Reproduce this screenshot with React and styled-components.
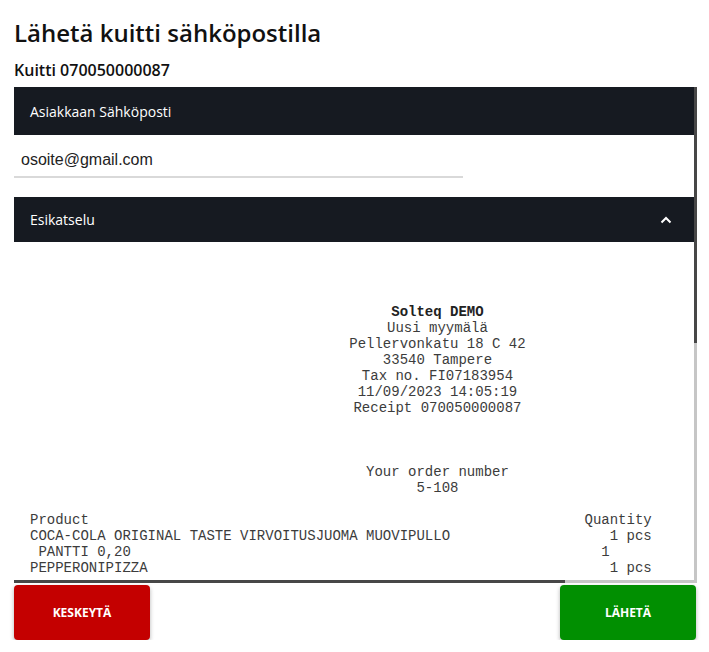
import React from 'react';
import styled, { createGlobalStyle } from 'styled-components';

const GlobalStyle = createGlobalStyle`
   html, body {
      margin: 0;
      padding: 0;
      background: #fff;
   }

   body {
      font-family: 'Open Sans', 'Liberation Sans', sans-serif;
      color: #111;
   }

   * {
      box-sizing: border-box;
   }
`;

const headerLines = [
   { text: 'Solteq DEMO', bold: true },
   { text: 'Uusi myymälä' },
   { text: 'Pellervonkatu 18 C 42' },
   { text: '33540 Tampere' },
   { text: 'Tax no. FI07183954' },
   { text: '11/09/2023 14:05:19' },
   { text: 'Receipt 070050000087' },
   { text: '' },
   { text: '' },
   { text: '' },
   { text: 'Your order number' },
   { text: '5-108' },
   { text: '' },
];

const pad = (left, right, width = 74) =>
   left + ' '.repeat(Math.max(1, width - left.length - right.length)) + right;

const rows = [
   pad('Product', 'Quantity'),
   pad('COCA-COLA ORIGINAL TASTE VIRVOITUSJUOMA MUOVIPULLO', '1 pcs'),
   pad(' PANTTI 0,20', '1     '),
   pad('PEPPERONIPIZZA', '1 pcs'),
   '',
   pad('Product', 'Price'),
   pad('COCA-COLA ORIGINAL TASTE VIRVOITUSJUOMA MUOVIPULLO', '3,20'),
   pad(' PANTTI 0,20', '0,20'),
   pad('PEPPERONIPIZZA', '11,90'),
   '',
   pad('Total', '15,30 EUR'),
];

// scroll geometry of the preview pane (content is larger than the pane)
const VIEW_W = 680;
const VIEW_H = 493;
const CONTENT_W = 843;
const CONTENT_H = 954;

const App = () => {
   const thumbH = Math.round((VIEW_H + 3) * (VIEW_H / CONTENT_H));
   const thumbW = Math.round((VIEW_W + 3) * (VIEW_W / CONTENT_W));

   return (
      <Page>
         <GlobalStyle />
         <Title>Lähetä kuitti sähköpostilla</Title>
         <Subtitle>Kuitti 070050000087</Subtitle>

         <ScrollFrame>
            <Viewport>
               <SectionBar $height={48}>Asiakkaan Sähköposti</SectionBar>
               <InputRow>
                  <EmailInput defaultValue="osoite@gmail.com" />
               </InputRow>

               <SectionBar $height={45}>
                  Esikatselu
                  <svg width="12" height="8" viewBox="0 0 12 8">
                     <polyline
                        points="1.5,6.5 6,2 10.5,6.5"
                        fill="none"
                        stroke="#fff"
                        strokeWidth="2"
                     />
                  </svg>
               </SectionBar>

               <Receipt>
                  {headerLines.map((line, i) => (
                     <Centered key={i} $bold={line.bold}>
                        {line.text || ' '}
                     </Centered>
                  ))}
                  {rows.map((row, i) => (
                     <Line key={`r${i}`}>{row || ' '}</Line>
                  ))}
               </Receipt>
            </Viewport>

            <VTrack>
               <VThumb style={{ height: thumbH }} />
            </VTrack>
            <HTrack>
               <HThumb style={{ width: thumbW }} />
            </HTrack>
         </ScrollFrame>

         <Actions>
            <ActionButton $color="#c40000">Keskeytä</ActionButton>
            <ActionButton $color="#018f01">Lähetä</ActionButton>
         </Actions>
      </Page>
   );
};

export default App;

const Page = styled.div`
   padding: 14px 12px 0 14px;
   width: 709px;
`;

const Title = styled.h1`
   margin: 0;
   font-size: 24px;
   font-weight: 600;
   line-height: 38px;
   color: #111;
`;

const Subtitle = styled.div`
   font-size: 16px;
   font-weight: 600;
   line-height: 22px;
   margin-top: 7px;
   margin-bottom: 6px;
   color: #111;
`;

const ScrollFrame = styled.div`
   position: relative;
   width: 683px;
   height: 496px;
`;

const Viewport = styled.div`
   width: 680px;
   height: 493px;
   overflow: hidden;
`;

const VTrack = styled.div`
   position: absolute;
   top: 0;
   right: 0;
   bottom: 0;
   width: 3px;
   background: #c6c6c6;
`;

const VThumb = styled.div`
   width: 100%;
   background: #474747;
`;

const HTrack = styled.div`
   position: absolute;
   left: 0;
   right: 0;
   bottom: 0;
   height: 3px;
   background: #c6c6c6;
`;

const HThumb = styled.div`
   height: 100%;
   background: #474747;
`;

const SectionBar = styled.div`
   display: flex;
   align-items: center;
   justify-content: space-between;
   width: 680px;
   height: ${props => props.$height}px;
   padding: 0 22px 0 16px;
   background: #161a21;
   color: #fff;
   font-size: 14px;
   font-weight: 400;
`;

const InputRow = styled.div`
   height: 62px;
   padding-top: 12px;
`;

const EmailInput = styled.input`
   display: block;
   width: 449px;
   height: 31px;
   border: none;
   border-bottom: 2px solid #d9d9d9;
   padding: 0 7px 4px;
   font-family: 'Liberation Sans', Arial, sans-serif;
   font-size: 16px;
   color: #222;
   outline: none;
   background: transparent;
`;

const Receipt = styled.div`
   width: ${CONTENT_W}px;
   padding: 62px 12px 14px 16px;
   font-family: 'Liberation Mono', 'Courier New', monospace;
   font-size: 14px;
   line-height: 16px;
   color: #3c3c3c;
   white-space: pre;
`;

const Centered = styled.div`
   width: 97ch;
   text-align: center;
   font-weight: ${props => (props.$bold ? 700 : 400)};
   color: ${props => (props.$bold ? '#222' : 'inherit')};
`;

const Line = styled.div`
   width: 97ch;
`;

const Actions = styled.div`
   display: flex;
   justify-content: space-between;
   width: 682px;
   margin-top: 2px;
`;

const ActionButton = styled.button`
   width: 136px;
   height: 55px;
   border: none;
   border-radius: 4px;
   background: ${props => props.$color};
   color: #fff;
   font-family: 'Open Sans', sans-serif;
   font-size: 12px;
   font-weight: 700;
   text-transform: uppercase;
   box-shadow: 0 2px 4px rgba(0, 0, 0, 0.3);
   cursor: pointer;
`;
